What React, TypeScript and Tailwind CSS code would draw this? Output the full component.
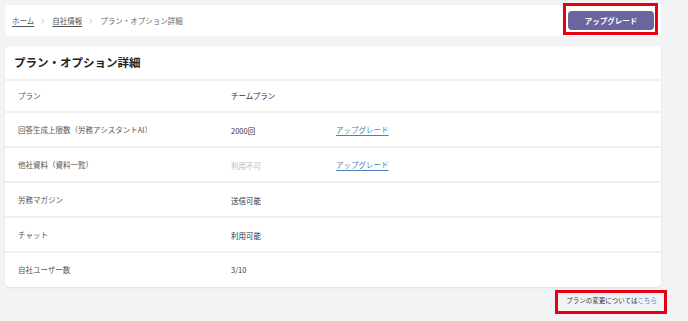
import React from "react";
import { ChevronRight } from "lucide-react";

const rows = [
    { label: "プラン", value: "チームプラン", h: "h-[32px]", shift: false },
    { label: "回答生成上限数（労務アシスタントAI）", value: "2000回", link: true, h: "h-[35px]", shift: true },
    { label: "他社資料（資料一覧）", value: "利用不可", muted: true, link: true, h: "h-[35px]", shift: true },
    { label: "労務マガジン", value: "送信可能", h: "h-[35px]", shift: true },
    { label: "チャット", value: "利用可能", h: "h-[35px]", shift: true },
    { label: "自社ユーザー数", value: "3/10", h: "h-[34px]", shift: false, last: true },
];

const App = () => {
    return (
        <div
            className="h-screen w-full bg-[#f2f3f5] pt-[5px] pl-[5px]"
            style={{ fontFamily: '"Noto Sans CJK JP", "Noto Sans", sans-serif' }}
        >
            <div className="w-[656px]">
                {/* breadcrumb */}
                <div className="h-[31px] bg-white rounded-[5px] flex items-center justify-between pl-[7px] pr-[7px]">
                    <div className="flex items-center text-[7.5px] text-[#666]">
                        <span className="underline underline-offset-2 text-[#555]">ホーム</span>
                        <ChevronRight size={8} className="mx-[5px] text-[#888]" strokeWidth={1.5} />
                        <span className="underline underline-offset-2 text-[#555]">自社情報</span>
                        <ChevronRight size={8} className="mx-[5px] text-[#888]" strokeWidth={1.5} />
                        <span>プラン・オプション詳細</span>
                    </div>
                    <div className="relative">
                        <button
                            type="button"
                            className="w-[86px] h-[19px] rounded-[4px] bg-[#6b659f] text-white text-[7.5px] font-bold flex items-center justify-center"
                        >
                            アップグレード
                        </button>
                        <div className="absolute -left-[5px] -top-[8px] -right-[4px] -bottom-[5px] border-[3px] border-[#e60012] pointer-events-none" />
                    </div>
                </div>

                {/* detail card */}
                <div className="mt-[10px] bg-white rounded-[5px] shadow-[0_1px_2px_rgba(0,0,0,0.08)]">
                    <div className="h-[35px] flex items-center pl-[9px] border-b-2 border-[#f0f0f2]">
                        <h1 className="text-[11.5px] font-bold text-[#222]">プラン・オプション詳細</h1>
                    </div>
                    {rows.map((row, i) => (
                        <div
                            key={i}
                            className={`${row.h} flex items-center text-[7.5px] ${row.last ? "" : "border-b-2 border-[#f0f0f2]"}`}
                        >
                            <div className="w-[226px] pl-[13px] text-[#555]">{row.label}</div>
                            <div className={`w-[105px] ${row.shift ? "pt-[3px]" : ""} ${row.muted ? "text-[#bbb]" : "text-[#333]"}`}>
                                {row.value}
                            </div>
                            {row.link && (
                                <span className="text-[#4a7fc1] underline underline-offset-2">アップグレード</span>
                            )}
                        </div>
                    ))}
                </div>

                {/* footer note */}
                <div className="flex justify-end pr-[4px] mt-[8px]">
                    <div className="relative text-[6.5px] leading-[10px] text-[#333]">
                        プランの変更については<span className="text-[#4a7fc1]">こちら</span>
                        <div className="absolute -left-[11px] -top-[5px] -right-[10px] -bottom-[9px] border-[3px] border-[#e60012] pointer-events-none" />
                    </div>
                </div>
            </div>
        </div>
    );
};

export default App;
